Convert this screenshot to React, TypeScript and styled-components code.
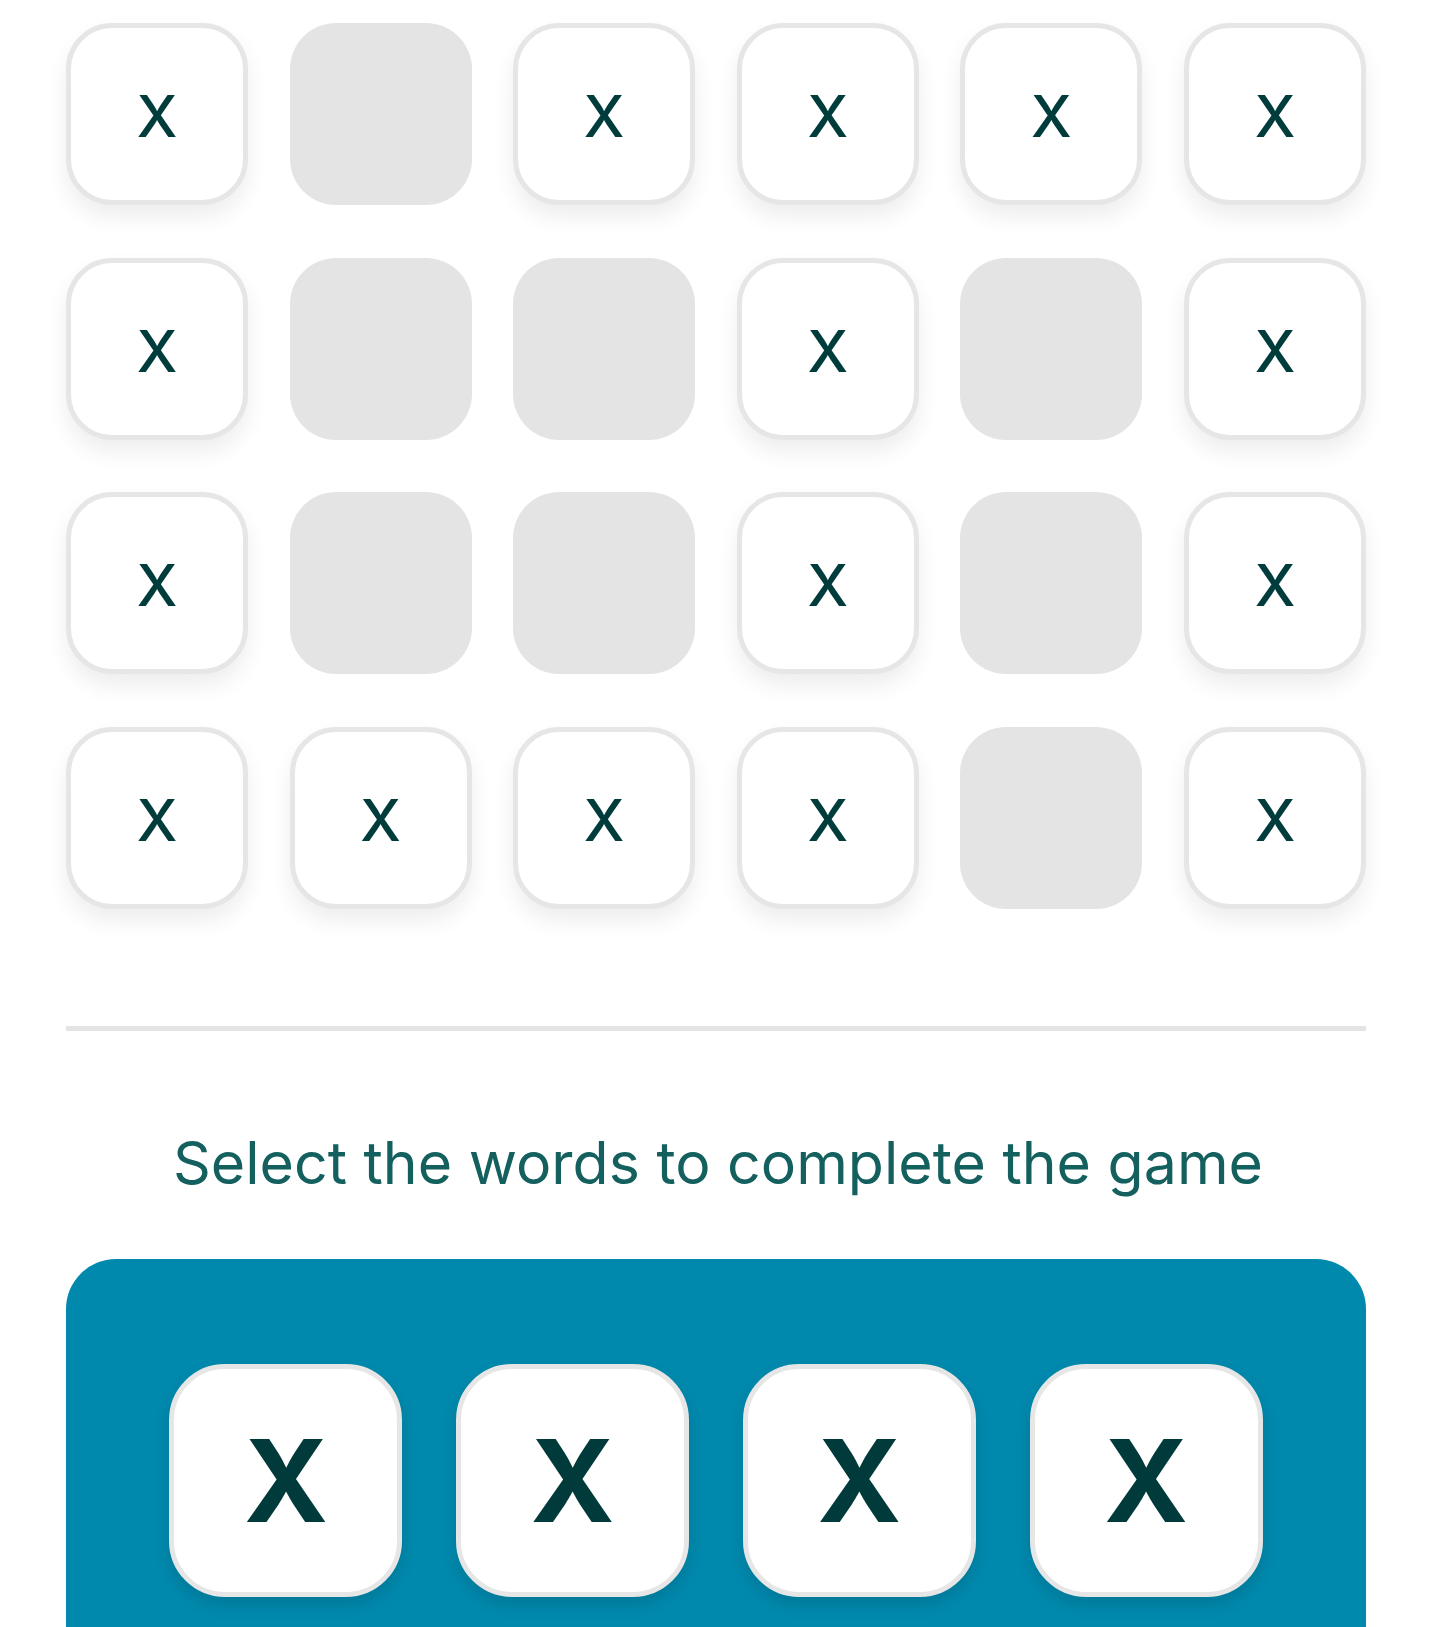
import styled, { createGlobalStyle } from 'styled-components';

// board layout: true = placed letter, false = empty slot
const board: boolean[][] = [
  [true, false, true, true, true, true],
  [true, false, false, true, false, true],
  [true, false, false, true, false, true],
  [true, true, true, true, false, true],
];

const choices = ['X', 'X', 'X', 'X'];

const GlobalStyle = createGlobalStyle`
  html, body {
    margin: 0;
    padding: 0;
    background: #ffffff;
    overflow: hidden;
  }

  body {
    font-family: Inter, 'Noto Sans', sans-serif;
  }
`;

export default function App() {
  return (
    <>
      <GlobalStyle />
      <Page>
        <Board>
          {board.flatMap((row, r) =>
            row.map((filled, c) => (
              <Cell key={`${r}-${c}`} $filled={filled}>
                {filled ? 'X' : ''}
              </Cell>
            ))
          )}
        </Board>
        <Divider />
        <Prompt>Select the words to complete the game</Prompt>
        <ChoicePanel>
          {choices.map((letter, i) => (
            <ChoiceTile key={i}>{letter}</ChoiceTile>
          ))}
        </ChoicePanel>
      </Page>
    </>
  );
}

const Page = styled.main`
  display: flex;
  flex-direction: column;
  padding: 23px 66px 0;
`;

const Board = styled.div`
  display: grid;
  grid-template-columns: repeat(6, 182px);
  justify-content: space-between;
  row-gap: 52.6px;
`;

const Cell = styled.div<{ $filled: boolean }>`
  box-sizing: border-box;
  width: 182px;
  height: 182px;
  display: flex;
  align-items: center;
  justify-content: center;
  border-radius: 46px;
  font-family: Inter, 'Noto Sans', sans-serif;
  font-size: 58px;
  font-weight: 500;
  color: #003c3c;
  background: ${p => (p.$filled ? '#ffffff' : '#e4e4e4')};
  border: ${p => (p.$filled ? '5px solid #e6e6e6' : 'none')};
  box-shadow: ${p =>
    p.$filled ? '0 12px 22px rgba(0, 0, 0, 0.07)' : 'none'};
  padding-top: 4px;
`;

const Divider = styled.hr`
  margin: 117px 0 0;
  height: 5px;
  border: none;
  background: #e4e4e4;
`;

const Prompt = styled.p`
  margin: 96px 0 0 4px;
  text-align: center;
  font-size: 59px;
  line-height: 72px;
  font-weight: 400;
  color: #14605e;
`;

const ChoicePanel = styled.section`
  margin-top: 60px;
  background: #0089ad;
  border-radius: 50px;
  display: flex;
  justify-content: center;
  gap: 53.7px;
  padding: 105px 0 80px;
`;

const ChoiceTile = styled.div`
  box-sizing: border-box;
  width: 233px;
  height: 233px;
  display: flex;
  align-items: center;
  justify-content: center;
  background: #ffffff;
  border: 5px solid #e6e6e6;
  border-radius: 56px;
  box-shadow: 0 8px 16px rgba(0, 0, 0, 0.12);
  font-family: Inter, 'Noto Sans', sans-serif;
  font-size: 114px;
  font-weight: 700;
  color: #003a3a;
`;
